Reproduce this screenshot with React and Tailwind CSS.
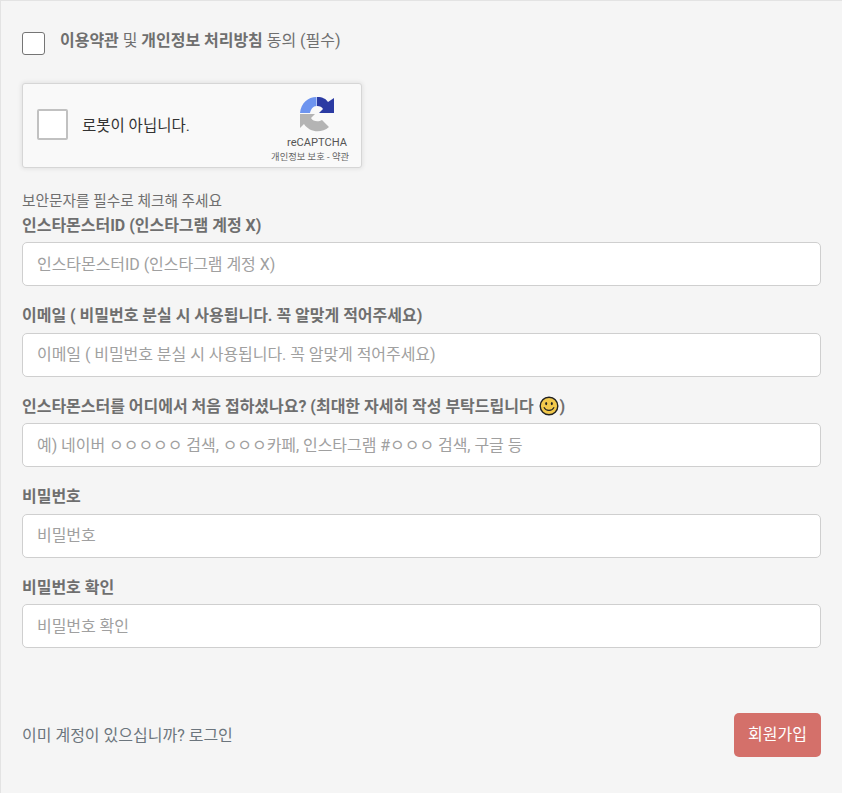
const font = { fontFamily: '"Roboto", "Noto Sans CJK KR", sans-serif' };

function Smiley() {
  return (
    <svg width="20" height="20" viewBox="0 0 20 20" className="inline-block align-[-4px] ml-[1px] mr-[1px]">
      <circle cx="10" cy="10" r="8.8" fill="#f2c94c" stroke="#222" strokeWidth="1.4" />
      <ellipse cx="7.2" cy="7.6" rx="1" ry="1.7" fill="#222" />
      <ellipse cx="12.8" cy="7.6" rx="1" ry="1.7" fill="#222" />
      <path d="M5.2 11.6 C6.6 15.2 13.4 15.2 14.8 11.6" fill="none" stroke="#222" strokeWidth="1.2" strokeLinecap="round" />
    </svg>
  );
}

function Field({ label, placeholder, children }) {
  return (
    <div className="mb-4">
      <label className="block mb-[3px] pt-[1px] text-[16px] leading-[26.5px] tracking-[-0.02px] font-bold text-[#6f6f6f]">{children || label}</label>
      <input
        readOnly
        placeholder={placeholder || label}
        className="block w-full h-11 px-[14px] bg-white border border-[#cfcfcf] rounded-[5px] text-[16px] tracking-[-0.05px] outline-none placeholder:text-[#a0a0a0]"
      />
    </div>
  );
}

function RecaptchaLogo() {
  return (
    <svg width="36" height="36" viewBox="0 0 36 36">
      <path d="M1 17 C2 7 9 1 17.5 1 L17.5 10 C14 10 12 13 11 17 Z" fill="#6d94ef" />
      <path d="M18 1 C24 1 27 3 29 6 L35 2 L35 17 L20 17 L24 13 C23 11 21 10 18 10 Z" fill="#2b3ba3" />
      <path d="M1 18 L16 18 L12 22 C14 26 20 26 23 24 L30 31 C22 38 10 36 5 28 L1 32 Z" fill="#b4b4b4" />
    </svg>
  );
}

export default function App() {
  return (
    <div style={font} className="w-[842px] h-[793px] overflow-hidden bg-[#f5f5f5] border-l border-t border-[#e3e3e3] pl-[21px] pr-[21px] pt-[31px] text-[#6f6f6f]">
      <div className="flex items-start h-[51px]">
        <span className="block w-[23px] h-[23px] bg-white border border-[#757575] rounded-[3px]" />
        <p className="ml-[15px] -mt-[2px] text-[16px] leading-[22.5px] tracking-[-0.03px]">
          <b>이용약관</b> 및 <b>개인정보 처리방침</b> 동의 (필수)
        </p>
      </div>

      <div className="flex items-start w-[340px] h-[85px] bg-[#f9f9f9] border border-[#d6d6d6] rounded-[3px] shadow-[0_0_4px_1px_rgba(0,0,0,0.08)]">
        <span className="block mt-[25px] ml-[14px] w-[31px] h-[31px] bg-white border-2 border-[#c1c1c1] rounded-[2px]" />
        <span className="mt-[30px] ml-[14px] text-[15.5px] leading-[24px] text-[#333]">로봇이 아닙니다.</span>
        <div className="ml-auto mr-[14px] flex flex-col items-end">
          <div className="mt-[12px] mr-[12px]"><RecaptchaLogo /></div>
          <span className="mt-[3px] text-[11.1px] leading-[15px] text-[#555]">reCAPTCHA</span>
          <span className="-mr-[2px] text-[9.3px] leading-[13px] text-[#666] whitespace-nowrap">개인정보 보호 - 약관</span>
        </div>
      </div>

      <p className="mt-[22.9px] text-[14.7px] leading-[21px] text-[#6f6f6f]">보안문자를 필수로 체크해 주세요</p>

      <Field label="인스타몬스터ID (인스타그램 계정 X)" />
      <Field label="이메일 ( 비밀번호 분실 시 사용됩니다. 꼭 알맞게 적어주세요)" />
      <Field placeholder="예) 네이버 ㅇㅇㅇㅇㅇ 검색, ㅇㅇㅇ카페, 인스타그램 #ㅇㅇㅇ 검색, 구글 등">
        인스타몬스터를 어디에서 처음 접하셨나요? (최대한 자세히 작성 부탁드립니다 <Smiley />)
      </Field>
      <Field label="비밀번호" />
      <Field label="비밀번호 확인" />

      <div className="flex items-center justify-between mt-[65px]">
        <span className="pt-[2px] text-[16px] text-[#6c757d]">이미 계정이 있으십니까? 로그인</span>
        <button className="h-11 w-[87px] bg-[#d4706a] text-white text-[16px] rounded-[5px]">회원가입</button>
      </div>
    </div>
  );
}
